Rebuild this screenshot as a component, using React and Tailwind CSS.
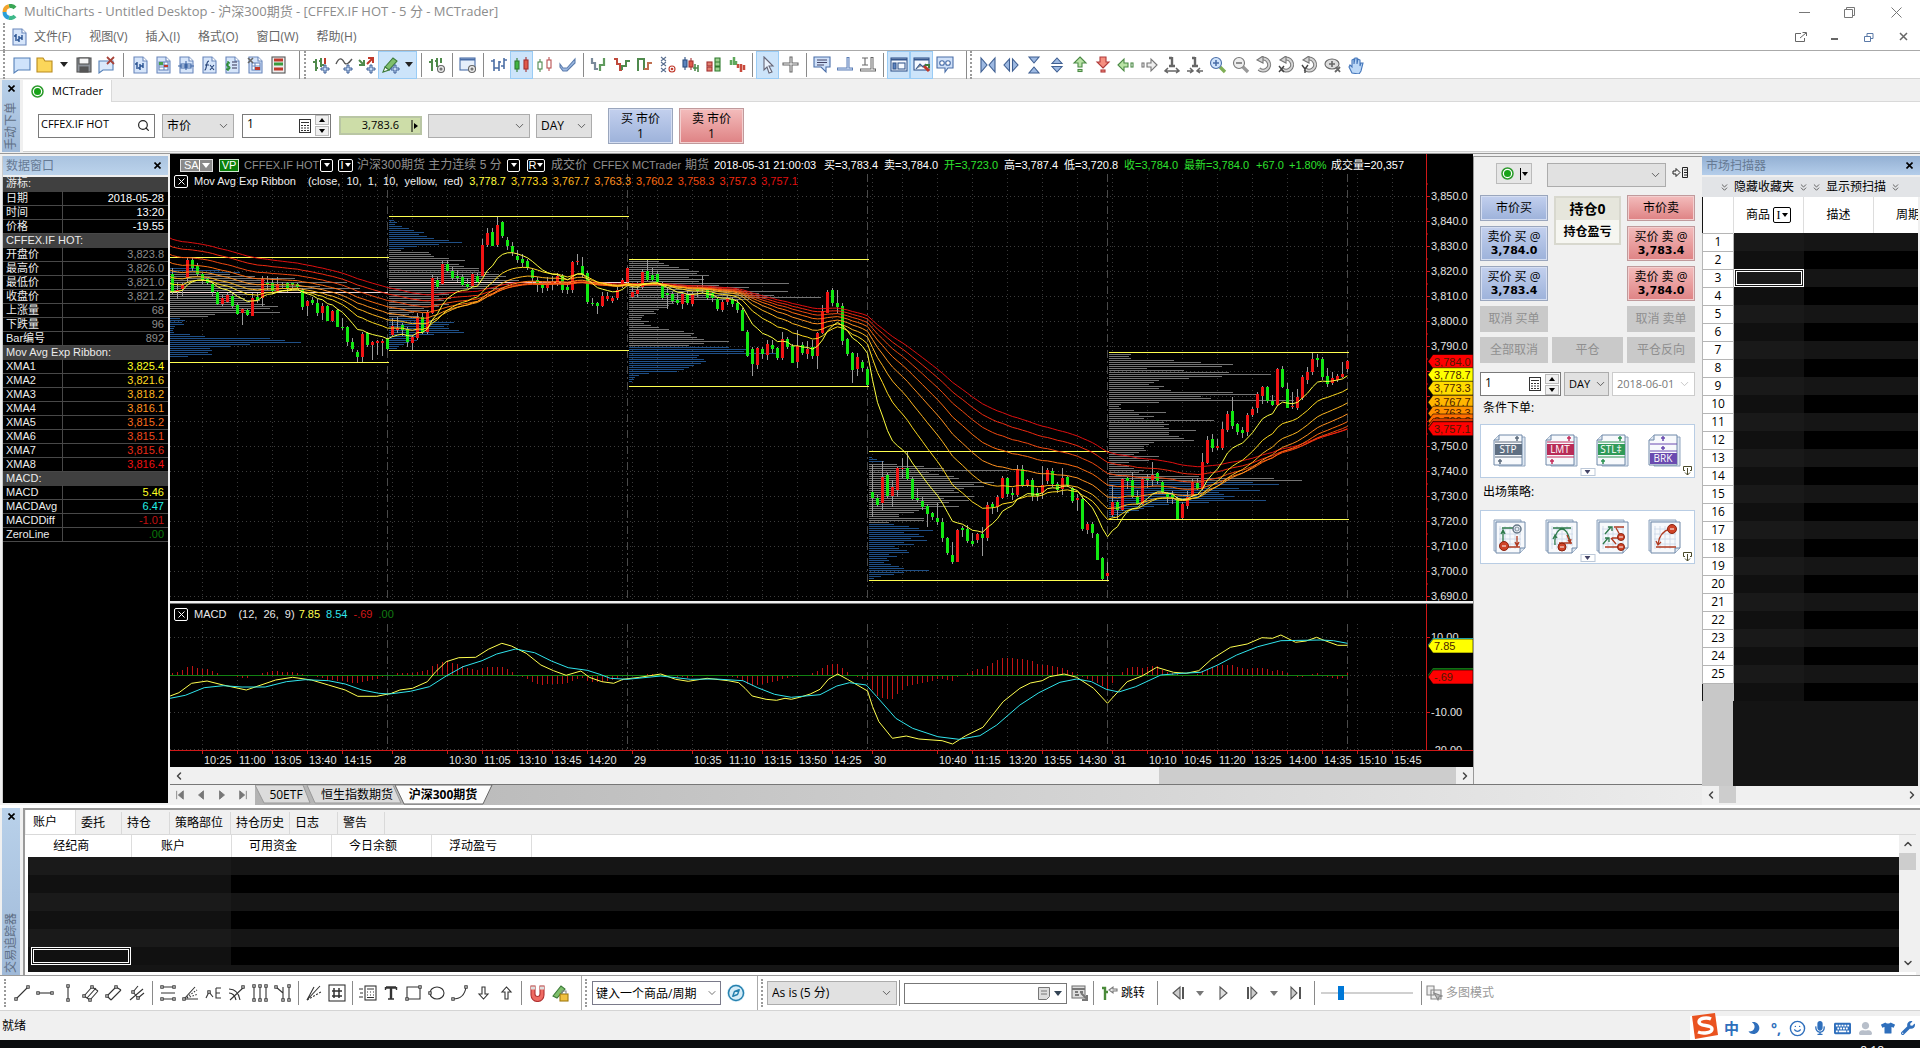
import React from "react";
import { FaTshirt, FaWrench, FaMicrophone, FaMoon, FaKeyboard, FaUserAlt } from "react-icons/fa";
import { ChevronDown, ChevronLeft, ChevronRight, ChevronUp, ChevronsDown, Search, Smile, Compass } from "lucide-react";

/* ------------------------------------------------------------------ */
/* Price data: each bar is "open close high low" as depth on the price scale */
/* ------------------------------------------------------------------ */
const parse = (s, shift = 0) =>
  s.split(",").map((b) => b.trim().split(" ").map((n) => Number(n) + shift));

const bars = [
  ...parse(
    "372 427 355 432,424 420 395 445,418 405 400 440,385 330 325 400,330 353 322 365,347 370 340 378,371 390 368 400,387 400 384 404,403 427 400 438,427 463 424 467,462 444 435 468,455 434 430 460,437 467 430 475,465 491 460 496,489 476 474 524,480 494 477 498,497 443 430 500,440 448 430 460,445 387 377 467,400 402 377 420,400 425 384 432,422 402 380 425,402 404 395 412,398 412 395 425,400 407 398 415,402 412 400 416,420 470 415 482,467 453 450 498,450 458 440 463,458 487 448 500,490 468 460 510,468 512 466 514,513 484 480 516,480 530 477 532,530 532 505 540,531 575 529 590,576 598 565 607,606 620 600 636,620 552 545 636,548 584 546 592,585 575 572 628,580 574 570 616,580 573 568 620,567 597 564 600"
  ),
  ...parse(
    "555 528 505 560,540 535 500 548,524 540 520 560,538 578 530 590,578 560 555 600,563 503 488 568,502 547 490 552,548 487 480 553,487 383 375 492,390 410 380 415,402 342 333 405,342 363 330 370,362 383 350 388,378 385 360 395,380 403 373 410,402 412 385 415,410 373 370 413,377 396 370 400,378 285 268 380,285 248 234 290,246 287 235 290,287 226 200 290,215 258 212 262,270 287 262 300,289 307 275 318,317 328 300 340,328 340 313 352,333 353 327 360,360 385 355 400,390 405 380 425,403 415 395 427,413 405 380 423,402 395 378 420,400 378 370 410,378 420 372 430,412 422 400 432,420 336 332 427,336 332 313 345,347 375 320 382,370 458 362 460,460 462 445 470,460 468 457 494,467 437 425 470,448 439 427 453,452 443 437 458,444 420 412 450,408 390 385 415,395 353 350 400"
  ),
  ...parse(
    "440 425 405 445,432 420 395 440,412 367 358 418,364 390 328 395,375 390 355 395,372 397 362 402,402 444 395 450,428 435 410 475,432 452 425 458,450 460 430 465,462 432 425 475,433 460 420 465,462 432 425 467,418 425 408 440,415 417 378 430,420 445 412 450,430 445 425 455,447 478 440 482,480 455 450 485,457 445 435 465,447 463 440 470,458 480 450 490,480 543 475 545,545 617 540 622,596 640 590 678,645 595 590 655,597 612 590 625,617 583 570 630,585 598 570 608,595 625 590 630,625 567 545 628,567 590 560 595,587 637 583 640,635 587 540 655,585 608 575 615,613 597 573 627,592 620 570 627,620 550 545 655,550 484 465 553,487 425 420 490,420 458 415 468,458 470 420 490,468 573 460 587,567 612 565 620,608 660 605 698,658 622 610 680,636 655 630 665,657 705 652 708"
  ),
  ...parse(
    "276 295 195 350,293 313 285 320,310 232 182 330,225 288 220 295,290 262 240 320,270 203 200 290,207 203 175 235,205 237 155 240,238 298 232 302,295 300 265 307,302 320 290 330,318 343 313 383,340 352 335 360,355 368 310 375,365 412 355 428,414 460 412 465,464 485 425 490,485 390 388 487,385 390 378 410,387 423 374 428,422 432 400 440,422 403 400 430,403 415 380 468,415 315 307 425,311 320 305 340,320 290 285 335,292 233 228 298,233 282 230 290,278 283 265 300,285 208 195 290,207 257 195 262,255 240 237 262,240 288 235 305,280 290 265 303,278 255 197 297,243 210 205 252,213 252 203 260,252 270 247 280,268 235 205 285,231 255 228 260,264 303 260 308,300 295 282 332,297 388 288 392,390 372 367 403,372 398 367 415,403 480 400 482,475 538 472 541,530 520 487 545,345 306 255 350,306 330 300 358,330 238 235 333,233 243 230 265,240 290 217 295,290 312 270 315,312 237 230 315,238 240 222 265,240 225 187 258,220 245 215 250,247 277 243 282,280 293 275 308,285 295 272 312,296 355 290 358,355 312 305 358,317 290 272 325,288 247 237 290,250 268 235 270,267 187 158 270,190 120 108 193,117 143 102 155,142 137 117 150,143 87 65 150,90 42 32 95,33 78 -10 85,73 98 68 103,90 100 80 113,97 45 40 110,45 27 20 50",
    750
  ),
  ...parse(
    "775 733 727 790,740 712 707 762,712 755 708 760,752 765 735 768,765 657 655 768,657 710 648 715,717 773 700 775,772 768 725 775,772 740 717 780,745 682 675 750,690 667 650 700,667 627 608 675,625 630 612 650,627 680 620 690,677 700 655 712,700 685 665 703,690 678 672 695,682 672 637 685,657 633 630 665"
  ),
];

const py = (v) => v / 3 - 4;
const px = (i) => 2.5 + 5 * i;

/* Exponential averages of 10..80 bars, seeded with their values left of the window */
const seeds = [425, 400, 380, 360, 337, 313, 287, 264];
const ribbonColors = ["#ffff40", "#ffdb20", "#ffb620", "#ff9220", "#ff6d10", "#f04910", "#f02a10", "#e01010"];
const ribbons = seeds.map((seed, k) => {
  const a = 2 / ((k + 1) * 10 + 1);
  let e = seed;
  const pts = [`0,${py(seed).toFixed(1)}`];
  bars.forEach((b, i) => {
    e += a * (b[1] - e);
    pts.push(`${px(i)},${py(e).toFixed(1)}`);
  });
  return pts.join(" ");
});

/* Volume profile per session: [kind, first depth, lengths...] with one row every two pixels */
const profiles = [
  { x: 0, rows: [
    ["b", 355, 30, 50, 70], ["g", 373, 60, 85, 125, 95, 177, 120, 150, 190, 130], ["p", 427, 218],
    ["g", 433, 80, 70, 75, 90, 80, 95, 108, 100, 80, 110, 45, 38],
    ["b", 505, 10, 15, 12, 14, 5, 4, 3, 4, 20, 35, 100, 115, 131, 80, 60, 40, 42, 38, 42, 18]] },
  { x: 219, rows: [
    ["b", 211, 5, 8, 6, 13, 20, 25, 35, 30, 38, 45, 60, 73, 50, 28, 15],
    ["g", 301, 12, 40, 42, 45, 60, 76, 60, 70, 75, 90, 90, 100, 110, 117, 110, 130], ["p", 397, 240],
    ["g", 403, 120, 100, 115, 70, 65, 60, 50, 62, 55, 45, 60, 50, 35, 40, 25, 20, 30],
    ["b", 505, 30, 45, 65, 60, 55, 60, 70, 75, 45, 30, 25, 28, 20, 15, 10, 8]] },
  { x: 459, rows: [
    ["g", 328, 25, 30, 35, 40, 50, 60, 70, 68, 80, 60, 75, 70, 160, 90, 120, 110, 159, 130, 145, 192, 120, 60, 45, 40, 38, 30, 25, 27, 15, 13, 12, 20, 15, 22, 30, 40, 55, 65, 62, 68, 75, 100, 75, 60],
    ["b", 592, 100, 118, 115, 150, 70, 68, 75, 77, 72, 65, 60, 55, 48, 20, 10, 6, 5, 3]] },
  { x: 699, rows: [
    ["b", 922, 3, 8, 15],
    ["g", 941, 28, 55, 75, 140, 60, 70, 85, 90, 80, 125, 105, 115, 95, 85, 90, 70, 105, 75, 100, 80, 70, 90, 60, 50, 45, 30, 30, 55, 55, 20],
    ["b", 1123, 25, 40, 50, 64, 35, 50, 55, 42, 58, 35, 45, 25, 30, 38, 40, 20, 28, 18, 20, 15, 22, 30, 35, 60, 35, 25, 12, 5]] },
  { x: 939, rows: [
    ["g", 613, 22, 20, 22, 65, 92, 124, 113, 38, 75, 120, 162, 113, 80, 50, 45, 40, 55, 50, 62, 124, 150, 92, 102, 185, 50, 12, 10, 12, 25, 57, 30, 45, 35, 105, 55, 60, 55, 60, 87, 60, 60, 70, 75, 85, 45, 40, 35, 35, 37, 30, 25, 50, 35, 40, 20, 12, 20, 25, 35, 30, 48, 90, 165, 193],
    ["b", 997, 144, 170, 100, 130, 151, 110, 115, 125, 115, 157, 100, 60, 45, 35, 30, 20, 12, 6]] },
];
const profileColor = { b: "#1f4f86", g: "#747474", p: "#f0d8d8" };

const levels = [
  [0, 219, 322, 637], [219, 459, 199, 601], [459, 699, 328, 709], [699, 939, 904, 1291], [939, 1179, 607, 1108],
];

const minorGrid = [32, 67, 102, 137, 172, 207, 222, 242, 277, 312, 347, 382, 417, 452, 462, 487, 522, 557, 592, 627, 662, 702, 732, 767, 802, 837, 872, 907, 942, 977, 1012, 1047, 1082, 1117, 1152, 1187, 1222];
const dayGrid = [217, 457, 697, 937, 1177];
const timeLabels = [
  [32, "10:25"], [67, "11:00"], [102, "13:05"], [137, "13:40"], [172, "14:15"], [222, "28"], [277, "10:30"], [312, "11:05"], [347, "13:10"], [382, "13:45"], [417, "14:20"], [462, "29"], [522, "10:35"], [557, "11:10"], [592, "13:15"], [627, "13:50"], [662, "14:25"], [702, "30"], [767, "10:40"], [802, "11:15"], [837, "13:20"], [872, "13:55"], [907, "14:30"], [942, "31"], [977, "10:10"], [1012, "10:45"], [1047, "11:20"], [1082, "13:25"], [1117, "14:00"], [1152, "14:35"], [1187, "15:10"], [1222, "15:45"],
];

/* MACD traces, sampled in two halves of the window */
const trace = (a, b) => [
  ...a.map(([x, y]) => [x / 2.376 - 10, y / 3 - 14]),
  ...b.map(([x, y]) => [x / 2.376 + 650, y / 3 - 14]),
];
const macd = trace(
  [[24, 318], [45, 308], [75, 280], [112, 273], [150, 285], [205, 300], [240, 285], [275, 270], [315, 262], [360, 270], [400, 285], [440, 300], [470, 319], [515, 319], [550, 310], [570, 300], [600, 295], [635, 275], [655, 245], [680, 215], [710, 203], [750, 202], [780, 178], [812, 160], [835, 168], [870, 190], [905, 225], [935, 242], [965, 256], [1000, 243], [1020, 262], [1050, 275], [1078, 280], [1100, 268], [1140, 262], [1190, 252], [1225, 268], [1255, 274], [1300, 265], [1350, 272], [1375, 278], [1390, 295], [1407, 318], [1440, 328], [1465, 331], [1485, 325], [1500, 328], [1520, 322], [1545, 312]],
  [[0, 298], [20, 268], [42, 252], [65, 268], [113, 303], [125, 350], [140, 395], [172, 445], [205, 438], [235, 447], [290, 452], [315, 462], [345, 438], [387, 412], [410, 375], [435, 335], [475, 295], [500, 279], [528, 272], [545, 260], [580, 252], [610, 262], [650, 295], [683, 340], [730, 275], [765, 258], [800, 232], [840, 247], [870, 250], [900, 242], [930, 208], [975, 172], [1015, 162], [1050, 143], [1075, 145], [1095, 135], [1130, 157], [1155, 153], [1180, 142], [1200, 152], [1230, 166], [1253, 166]]
);
const macdAvg = trace(
  [[24, 325], [60, 316], [105, 293], [150, 287], [195, 291], [250, 291], [300, 275], [345, 269], [400, 272], [440, 282], [480, 300], [520, 310], [545, 312], [595, 304], [640, 290], [680, 258], [720, 230], [765, 212], [800, 192], [845, 177], [890, 188], [930, 213], [970, 233], [1015, 241], [1045, 253], [1070, 265], [1110, 268], [1190, 258], [1260, 268], [1320, 267], [1385, 272], [1420, 293], [1460, 313], [1500, 322]],
  [[0, 314], [40, 288], [70, 278], [110, 285], [135, 320], [180, 385], [220, 415], [280, 440], [330, 448], [380, 437], [420, 405], [475, 345], [520, 308], [570, 277], [610, 267], [645, 275], [680, 298], [710, 306], [750, 290], [810, 255], [860, 250], [905, 247], [945, 225], [990, 195], [1040, 170], [1095, 152], [1190, 150], [1220, 152], [1253, 160]]
);
const at = (line, x) => {
  const k = line.findIndex((p) => p[0] >= x);
  if (k <= 0) return line[0][1];
  const [x0, y0] = line[k - 1];
  const [x1, y1] = line[k];
  return y0 + ((x - x0) / (x1 - x0)) * (y1 - y0);
};
const toPoints = (line) => line.map((p) => `${p[0].toFixed(1)},${p[1].toFixed(1)}`).join(" ");
const ZERO = 71.5;

/* ------------------------------------------------------------------ */
/* Small drawn icons                                                    */
/* ------------------------------------------------------------------ */
const G = ({ children, s = 18, c = "#555" }) => (
  <svg width={s} height={s} viewBox="0 0 18 18" fill="none" stroke={c} strokeWidth="1.1" aria-hidden="true">
    {children}
  </svg>
);
const Page = ({ children }) => (
  <G c="#6a88bc">
    <path d="M3 1h9l4 4v12H3z" fill="#d6e5fa" />
    <path d="M12 1v4h4" fill="#fff" />
    {children}
  </G>
);
const Plus = ({ x = 13, y = 13 }) => (
  <path d={`M${x - 1} ${y - 4}h2v3h3v2h-3v3h-2v-3h-3v-2h3z`} fill="#c3d9f5" stroke="#3c5f96" strokeWidth="1" />
);
const Hc = ({ c, f, x, y, h }) => (
  <>
    <path d={`M${x + 2} ${y - 3}v${h + 6}`} stroke={c} />
    <rect x={x} y={y} width="4" height={h} fill={f} stroke={c} />
  </>
);
const Arc = ({ children }) => (
  <G c="#777">
    <path d="M6 3a6 6 0 1 1-2 10" strokeWidth="4" />
    <path d="M6 3a6 6 0 1 1-2 10" stroke="#d4d4d4" strokeWidth="2" />
    <path d="M8 0v7L2 4z" fill="#d4d4d4" />
    {children}
  </G>
);

const icons = {
  window: <G c="#5580b8"><path d="M1 2h16v12H5l-4 3z" fill="#cfe3fb" /></G>,
  folder: <G c="#b98a1c"><path d="M1 16V2h6l2 3h7v11z" fill="#fbd65a" /></G>,
  save: <G c="#555"><rect x="2" y="2" width="14" height="14" fill="#8d9299" /><rect x="4" y="2" width="10" height="6" fill="#f5f5f5" /><rect x="5" y="11" width="8" height="5" fill="#555" /></G>,
  closeWin: <G c="#5580b8"><path d="M1 5h14v9H5l-4 3z" fill="#dceafb" /><path d="M9 1l7 7M16 1L9 8" stroke="#a8443a" strokeWidth="1.800" /></G>,
  docChart: <Page><path d="M6 6v7M4 8h2M9 8v6M7 12h2M12 7v5M9 10h3" stroke="#26508f" strokeWidth="1.400" /></Page>,
  docGrid: <Page><rect x="5" y="6" width="9" height="8" fill="#fff" /><path d="M5 9h9M5 11h9M10 6v8" /><rect x="5" y="6" width="4" height="3" fill="#49a04b" stroke="none" /><rect x="10" y="9" width="4" height="2" fill="#c0392b" stroke="none" /></Page>,
  docTree: <Page><path d="M9 5v9M1 10h16M4 8h4v4H4zM10 8h4v4h-4z" fill="#e8f0fc" stroke="#3f66a5" /></Page>,
  docFx: <Page><path d="M9 5c-2 0-2 2-2.500 4.500S6 14 4.500 14M5 9h4M10 9l4 5M14 9l-4 5" stroke="#223f74" /></Page>,
  docDollar: <Page><path d="M9 6h5M9 9h5M9 12h5" stroke="#335" /><path d="M7 7c-4-1-4 3-1.500 3.500S7 14 3 13M5 5v10" stroke="#2c8a35" strokeWidth="1.300" /></Page>,
  docPct: <Page><rect x="6" y="7" width="8" height="7" fill="#fff" /><path d="M6 10h8M9 7v7" /><path d="M2 2l5 5M7 2L2 7" stroke="#666" strokeWidth="1.600" /><rect x="9" y="11" width="5" height="3" fill="#c0392b" stroke="none" /></Page>,
  docBars: <G c="#555"><rect x="3" y="1" width="13" height="16" fill="#eee" /><path d="M5 4h9" stroke="#c0392b" strokeWidth="3" /><path d="M5 8h9" stroke="#3a9a3c" strokeWidth="3" /><path d="M5 13h9" stroke="#c0392b" strokeWidth="3" /></G>,
  addBars: <G c="#4f8a4b"><path d="M4 3v12M1 6h3M4 12h2M9 2v9M7 5h2M9 9h3" strokeWidth="2" /><path d="M13 2v6" stroke="#c0392b" strokeWidth="2" /><Plus /></G>,
  addLine: <G><path d="M1 8c3-7 6-6 8-2s5 1 8-3" strokeWidth="1.400" /><Plus /></G>,
  addSig: <G c="#4f8a4b"><path d="M1 4l5 5M6 4v5H1" strokeWidth="2" /><path d="M9 8l6-6M10 2h5v5" stroke="#c0392b" strokeWidth="2" /><Plus /></G>,
  pen: <G c="#3c7a38"><path d="M3 11L11 2l4 3-8 9z" fill="#7ebf6c" /><path d="M1 16l2-5 4 3z" fill="#fff" /><Plus x={13} y={13} /></G>,
  barGear: <G c="#4f8a4b"><path d="M4 3v12M1 6h3M9 2v9M7 5h2M13 2v5" strokeWidth="2" /><circle cx="13" cy="13" r="3.500" stroke="#666" fill="#eee" /><circle cx="13" cy="13" r="1" stroke="#666" /></G>,
  winGear: <G c="#4a6ea8"><rect x="1" y="2" width="15" height="12" fill="#e6effb" /><path d="M1 3.500h15" strokeWidth="2" /><circle cx="13" cy="13" r="3.500" stroke="#666" fill="#eee" /><circle cx="13" cy="13" r="1" stroke="#666" /></G>,
  ohlc: <G c="#4c6fa5"><path d="M4 3v12M1 5h3M4 12h3M9 5v10M7 12h2M9 6h2M14 2v11M11 10h3M14 4h3" strokeWidth="1.600" /></G>,
  candle: <G><Hc c="#2f7a2f" f="#41b541" x={2} y={5} h={8} /><Hc c="#a43030" f="#e05a4a" x={11} y={4} h={9} /></G>,
  hollow: <G><Hc c="#4f8a4f" f="#fff" x={2} y={6} h={7} /><Hc c="#b85050" f="#fff" x={11} y={4} h={8} /></G>,
  lineArea: <G c="#5c7dad"><path d="M1 8l3 4h4l8-9v4l-8 8H4l-3-4z" fill="#9db9e2" /></G>,
  renko1: <G><path d="M2 2v5h3v6h3" stroke="#7a8a9a" strokeWidth="2.200" /><path d="M10 15V9h4V2" stroke="#5f9a5d" strokeWidth="2.200" /></G>,
  renko2: <G><path d="M1 3h3v5h3v6h2" stroke="#c0493b" strokeWidth="2" /><path d="M9 14v-4h4V5h4" stroke="#4f8a4d" strokeWidth="2" /></G>,
  kagi: <G><path d="M2 15V3h6v11" stroke="#4f8a4d" strokeWidth="2" /><path d="M8 13h4V7h4" stroke="#c07050" strokeWidth="2" /></G>,
  pnf: <G c="#5a6f90"><path d="M2 1l5 4M7 1L2 5M2 6l5 4M7 6l-5 4M2 12l5 4M7 12l-5 4" /><circle cx="13" cy="13" r="3" stroke="#c0392b" /><circle cx="13" cy="13" r=".8" stroke="#c0392b" /></G>,
  mixed: <G><Hc c="#2b4d80" f="#5b83bd" x={1} y={4} h={7} /><Hc c="#a43030" f="#e05a4a" x={7} y={5} h={6} /><path d="M13 8v7M16 9v7M11 12h5" stroke="#4f8a4d" strokeWidth="1.600" /></G>,
  blocks: <G><rect x="2" y="6" width="5" height="4" fill="#e08070" stroke="#a43030" /><rect x="2" y="11" width="5" height="4" fill="#e08070" stroke="#a43030" /><path d="M10 2h5v4h-5zM10 6h5v4h-5zM10 11h5v4h-5z" fill="#9fd190" stroke="#2f7a2f" /></G>,
  steps: <G><path d="M3 9V4M6 9V1M8 9V5" stroke="#5fa85c" strokeWidth="2.500" /><path d="M10 8v4M13 8v8M16 9v5" stroke="#c84a3c" strokeWidth="2.500" /></G>,
  cursor: <G c="#667"><path d="M5 1l9 9h-4l3 6-3 1-2-6-3 3z" fill="#eaf3fd" /></G>,
  cross: <G c="#666"><path d="M8 1h2v6h6v2h-6v7H8V9H1V7h7z" fill="#fff" /></G>,
  note: <G c="#4a6ea8"><path d="M1 1h16v10h-4v5l-5-5H1z" fill="#cfe0f8" /><path d="M4 4h10M4 6.500h10M4 9h7" stroke="#446" strokeWidth="1" /></G>,
  snap: <G c="#5b7db5"><path d="M1 13h16M12 1v13" strokeWidth="3" /><path d="M2 13h14M12 2v11" stroke="#dbe8fa" strokeWidth="1" /></G>,
  snapT: <G c="#666"><path d="M1 14h16M13 1v13" strokeWidth="3" /><path d="M2 14h14M13 2v12" stroke="#fff" strokeWidth="1" /><path d="M3 2h6M3 9h6M6 2v7" /></G>,
  panel: <G c="#36588f"><rect x="1" y="2" width="16" height="13" fill="#f6faff" /><path d="M1 3.500h16" strokeWidth="2" /><rect x="3" y="7" width="3" height="6" fill="#5d84c0" /><rect x="8" y="7" width="7" height="6" /></G>,
  panelPic: <G c="#36588f"><rect x="1" y="2" width="15" height="12" fill="#f6faff" /><path d="M1 3.500h15" strokeWidth="2" /><path d="M3 13l4-5 3 3 3-3" fill="#999" /><path d="M11 10l5 5" stroke="#c0392b" strokeWidth="3" /><path d="M12 9h4v3" stroke="#3f7d3d" strokeWidth="2" /></G>,
  find: <G c="#4a6ea8"><path d="M1 1h16v11h-5l-3 4v-4H1z" fill="#cfe0f8" /><circle cx="6" cy="7" r="2.300" fill="#fff" /><circle cx="12" cy="7" r="2.300" fill="#fff" /></G>,
  inH: <G c="#3f5f92"><path d="M2 2v14l6-7zM16 2v14l-6-7z" fill="#9db9e2" /></G>,
  outH: <G c="#3f5f92"><path d="M7.500 3v12L2 9zM10.500 3v12L16 9z" fill="#9db9e2" /></G>,
  inV: <G c="#3f5f92"><path d="M4 1h10L9 7zM4 17h10L9 11z" fill="#9db9e2" /></G>,
  outV: <G c="#3f5f92"><path d="M4 7.500h10L9 2zM4 10.500h10L9 16z" fill="#9db9e2" /></G>,
  up: <G c="#4b8a45"><path d="M9 1l6 6h-4v4H7V7H3z" fill="#b9e3a6" /><rect x="7" y="13.500" width="4" height="2" fill="#b9e3a6" /></G>,
  down: <G c="#b03a3a"><path d="M9 12l6-6h-3V1H6v5H3z" fill="#f58f80" /><rect x="7" y="14" width="4" height="2" fill="#f58f80" /></G>,
  left: <G c="#4b8a45"><path d="M1 9l6-6v4h4v4H7v4z" fill="#b9e3a6" /><rect x="14" y="7" width="2" height="4" /></G>,
  right: <G c="#777"><path d="M17 9l-6-6v4H7v4h4v4z" fill="#eee" /><rect x="2" y="7" width="2" height="4" /></G>,
  spaceOut: <G c="#666"><path d="M9 1v10M6 2h3M6 10h6" strokeWidth="2.400" /><path d="M2 15h14M5 12l-3 3 3 2M13 12l3 3-3 2" strokeWidth="1.500" /></G>,
  spaceIn: <G c="#666"><path d="M9 1v10M6 2h3M6 10h6" strokeWidth="2.400" /><path d="M1 15h6M17 15h-6M4 12l3 3-3 2M14 12l-3 3 3 2" strokeWidth="1.500" /></G>,
  zoomIn: <G c="#4a6ea8"><path d="M11 11l5 5" stroke="#7fae55" strokeWidth="3.400" /><circle cx="7" cy="7" r="5.500" fill="#cfe3fb" /><path d="M7 4v6M4 7h6" strokeWidth="1.600" /></G>,
  zoomOut: <G c="#777"><path d="M11 11l5 5" stroke="#999" strokeWidth="3.400" /><circle cx="7" cy="7" r="5.500" fill="#eee" /><path d="M4 7h6" strokeWidth="1.600" /></G>,
  undo: <Arc />,
  undoX: <Arc><path d="M1 10l5 6M6 10l-5 6" stroke="#444" strokeWidth="1.400" /></Arc>,
  undoY: <Arc><path d="M1 9l3 4 3-4M4 13v4" stroke="#444" strokeWidth="1.400" /></Arc>,
  eye: <G c="#666"><ellipse cx="8" cy="8" rx="7" ry="5" fill="#ddd" /><path d="M5 8h6M8 5v6" strokeWidth="1.600" /><path d="M12 11l4 5M16 11l-5 5" strokeWidth="1.800" /></G>,
  hand: <G c="#4577bb"><path d="M5 17l-3-6 1-2 2 2V4l2-1v5l1-6h2v6l1-5 2 1v6l1-3h2l-2 8-2 3z" fill="#bcd8f7" /></G>,
};

const Sq = ({ x, y }) => <rect x={x - 1.2} y={y - 1.2} width="2.400" height="2.400" fill="#fff" strokeWidth="1" />;
const K = (p) => <G c="#333">{p.children}</G>;
const drawIcons = {
  line: <K><path d="M3 15L15 3" /><Sq x={3} y={15} /><Sq x={15} y={3} /></K>,
  hline: <K><path d="M2 9h14" /><Sq x={2} y={9} /><Sq x={16} y={9} /></K>,
  vline: <K><path d="M9 2v14" /><Sq x={9} y={2} /><Sq x={9} y={16} /></K>,
  chan: <K><path d="M2 12l8-9M5 14l9-10M8 16l8-9M2 12l6 4M10 3l6 4" /><Sq x={2} y={12} /><Sq x={10} y={3} /><Sq x={8} y={16} /></K>,
  chan2: <K><path d="M2 12l9-9M6 16l10-10M2 12l4 4M11 3l5 3" /><Sq x={2} y={12} /><Sq x={11} y={3} /></K>,
  fork: <K><path d="M2 16l13-11M5 8l5-6M10 14l6-5M5 8l5 6" /><Sq x={5} y={8} /><Sq x={10} y={14} /></K>,
  fib: <K><path d="M2 3h14M2 9h14M2 15h14" /><Sq x={3} y={3} /><Sq x={15} y={3} /><Sq x={3} y={15} /><Sq x={15} y={15} /></K>,
  fan: <K><path d="M2 15h14M2 15L13 3" /><path d="M2 15l14-5M2 15L15 6" strokeDasharray="1.500 1.500" /><Sq x={2} y={15} /></K>,
  wave: <K><path d="M1 14l3-6 4 5M11 4v10h5M11 4h5M11 9h4" /><Sq x={4} y={8} /></K>,
  arcs: <K><path d="M2 16L16 3M1 5c7 0 10 5 11 11M1 9c4 0 6 3 7 7" /><Sq x={15} y={3} /></K>,
  cols: <K><path d="M3 3v12M9 3v12M15 3v12" /><Sq x={3} y={2} /><Sq x={9} y={2} /><Sq x={15} y={2} /><Sq x={3} y={16} /><Sq x={9} y={16} /><Sq x={15} y={16} /></K>,
  cols2: <K><path d="M2 3l7 6M9 3v12M15 3v12" /><Sq x={2} y={3} /><Sq x={9} y={16} /><Sq x={15} y={2} /><Sq x={15} y={16} /></K>,
  rays: <K><path d="M2 16L9 3M2 16L15 2" /><path d="M2 16l14-8" strokeDasharray="2 1.500" /></K>,
  grid: <K><rect x="1" y="1" width="16" height="16" /><path d="M6 4v10M11 4v10M4 7h10M4 12h10" strokeWidth="1.500" /></K>,
  note: <K><rect x="6" y="2" width="11" height="14" /><path d="M8 5h7M8 8h1M11 8h1M14 8h1M8 11h1M11 11h1M14 11h1M8 13.500h7M0 5h4M1 9h3M0 13h4" /></K>,
  text: <K><path d="M4 3.500h10M9 3v12" strokeWidth="2.400" /><path d="M3.500 3v3M14.500 3v3M6 15h6" strokeWidth="1.400" /></K>,
  rect: <K><path d="M2 3h13v12H2z" /><Sq x={2} y={15} /><Sq x={15} y={3} /></K>,
  ell: <K><ellipse cx="9" cy="9" rx="7" ry="6" /><Sq x={2} y={9} /></K>,
  arc: <K><path d="M2 15c8 0 12-5 13-12" /><Sq x={2} y={15} /><Sq x={15} y={3} /></K>,
  aDown: <K><path d="M8 3h3v7h3l-4.500 5L5 10h3z" /></K>,
  aUp: <K><path d="M8 15h3V8h3L9.500 3 5 8h3z" /></K>,
  magnet: <G c="#b03030"><path d="M3 2h4v8a2.500 2.500 0 0 0 5 0V2h4v9a6.500 6.500 0 0 1-13 0z" fill="#ee6a62" /><path d="M3 4h4M12 4h4" stroke="#ddd" strokeWidth="3" /></G>,
  penLock: <G c="#3c7a38"><path d="M2 12L10 2l4 3-8 9z" fill="#7ebf6c" /><rect x="9" y="10" width="8" height="7" fill="#f0c040" stroke="#a07a10" /><path d="M11 10V7h4v3" stroke="#888" /></G>,
};

const Btn = ({ label, children, on }) => (
  <button
    type="button"
    aria-label={label}
    className={`flex h-7 w-[23px] shrink-0 items-center justify-center ${on ? "border border-[#9accf5] bg-[#cce4fa]" : ""}`}
  >
    {children}
  </button>
);
const Sep = ({ wide }) => (
  <span className={`flex shrink-0 justify-center ${wide ? "w-[10px]" : "w-2"}`}>
    <span className="h-6 w-px bg-[#8a8a8a]" />
  </span>
);
const Grip = () => <span className="h-7 w-[2px] shrink-0 border-l-2 border-dotted border-[#9a9a9a]" />;
const Caret = ({ c = "#222" }) => (
  <svg width="8" height="5" viewBox="0 0 8 5" aria-hidden="true"><path d="M0 0h8L4 5z" fill={c} /></svg>
);
const Tools = ({ names, set, on = [] }) =>
  names.map((n) => <Btn key={n} label={n} on={on.includes(n)}>{set[n]}</Btn>);

const Select = ({ label, value, className, dim, arrow = "right-1" }) => (
  <div className={`relative shrink-0 ${className}`}>
    <select aria-label={label} defaultValue={value} className={`h-full w-full appearance-none border pl-1 outline-none ${dim ? "border-[#ccc] bg-white text-[#777]" : "border-[#acacac] bg-[#e1e1e1] text-black"}`}>
      <option>{value}</option>
    </select>
    <ChevronDown size={13} strokeWidth={1.5} className={`pointer-events-none absolute top-1/2 -translate-y-1/2 ${arrow} ${dim ? "text-[#bbb]" : "text-[#444]"}`} />
  </div>
);

const Calc = () => (
  <svg width="12" height="14" viewBox="0 0 12 14" fill="none" stroke="#333" aria-hidden="true">
    <rect x=".5" y=".5" width="11" height="13" />
    <path d="M2 3.500h8M2 6.500h2M5 6.500h2M8 6.500h2M2 9h2M5 9h2M8 9h2M2 11.500h2M5 11.500h2M8 11.500h2" />
  </svg>
);
const NumberBox = ({ label, className }) => (
  <div className={`flex h-6 shrink-0 items-center border border-[#7a7a7a] bg-white pr-px ${className}`}>
    <input aria-label={label} defaultValue="1" className="h-full w-full min-w-0 flex-1 pb-1 pl-1 outline-none" />
    <Calc />
    <span className="ml-1 flex flex-col gap-px">
      <button type="button" aria-label="增加" className="flex h-[10px] w-[14px] items-center justify-center border border-[#bbb] bg-[#f0f0f0]">
        <svg width="6" height="4" viewBox="0 0 6 4"><path d="M0 4h6L3 0z" /></svg>
      </button>
      <button type="button" aria-label="减少" className="flex h-[10px] w-[14px] items-center justify-center border border-[#bbb] bg-[#f0f0f0]">
        <svg width="6" height="4" viewBox="0 0 6 4"><path d="M0 0h6L3 4z" /></svg>
      </button>
    </span>
  </div>
);
const Led = () => (
  <svg width="13" height="13" viewBox="0 0 13 13" aria-hidden="true">
    <circle cx="6.500" cy="6.500" r="5.500" fill="#fff" stroke="#2b9a2b" strokeWidth="1.500" />
    <circle cx="6.500" cy="6.500" r="3.500" fill="#17a317" />
  </svg>
);
const XBtn = ({ label }) => (
  <button type="button" aria-label={label} className="flex h-4 w-4 items-center justify-center">
    <svg width="7" height="7" viewBox="0 0 7 7" stroke="#000" strokeWidth="1.600"><path d="M.5.5l6 6M6.500.5l-6 6" /></svg>
  </button>
);

const buyCls = "border border-[#9aa6bd] bg-linear-to-b from-[#c3d0ee] to-[#9db2da] text-black shadow-[inset_0_0_0_1px_#d5def2]";
const sellCls = "border border-[#c09a9c] bg-linear-to-b from-[#f3bcbc] to-[#de8284] text-black shadow-[inset_0_0_0_1px_#f3cfcf]";

/* ------------------------------------------------------------------ */
/* Title, menu and toolbar                                              */
/* ------------------------------------------------------------------ */
function TitleBar() {
  return (
    <header className="bg-white text-[#8c8c8c]">
      <div className="flex h-6 items-center pl-[2px]">
        <svg width="16" height="16" viewBox="0 0 16 16" fill="none" strokeWidth="4">
          <path d="M13 4A6 6 0 0 0 7 2.200" stroke="#3aa655" /><path d="M7 2.200A6 6 0 0 0 2.500 8" stroke="#f2a32c" />
          <path d="M2.500 8A6 6 0 0 0 7 13.800" stroke="#2a9fd8" /><path d="M7 13.800A6 6 0 0 0 13 12" stroke="#3fb98a" />
        </svg>
        <h1 className="ml-[6px] text-[13px]">MultiCharts - Untitled Desktop - 沪深300期货 - [CFFEX.IF HOT - 5 分 - MCTrader]</h1>
        <div className="ml-auto flex text-[#777]">
          <button type="button" aria-label="最小化" className="flex h-6 w-[45px] items-center justify-center"><svg width="11" height="11" stroke="currentColor"><path d="M0 5.500h11" /></svg></button>
          <button type="button" aria-label="还原" className="flex h-6 w-[45px] items-center justify-center"><svg width="11" height="11" fill="none" stroke="currentColor"><path d="M.5 2.500h8v8h-8zM2.500 2V.5h8v8H9" /></svg></button>
          <button type="button" aria-label="关闭" className="flex h-6 w-[48px] items-center justify-center"><svg width="11" height="11" stroke="currentColor"><path d="M.5.5l10 10M10.500.5l-10 10" /></svg></button>
        </div>
      </div>
      <nav className="flex h-[26px] items-center pl-[3px] text-[12px] text-[#666]">
        <Grip />
        <span className="mr-[6px] ml-[5px]">{icons.docChart}</span>
        {["文件(F)", "视图(V)", "插入(I)", "格式(O)", "窗口(W)", "帮助(H)"].map((m) => (
          <button type="button" key={m} className="mr-[18px]">{m}</button>
        ))}
        <div className="ml-auto flex text-[#666]">
          <button type="button" aria-label="弹出" className="flex w-[34px] justify-center"><svg width="12" height="10" fill="none" stroke="currentColor"><path d="M6 1.500H.5v8h9V6M5 6l6-5M7.500.5h4V4" /></svg></button>
          <button type="button" aria-label="最小化子窗口" className="flex w-[34px] justify-center"><svg width="8" height="10" stroke="currentColor" strokeWidth="2"><path d="M0 7h7" /></svg></button>
          <button type="button" aria-label="还原子窗口" className="flex w-[34px] justify-center"><svg width="10" height="10" fill="none" stroke="#5b7aa8"><path d="M.5 4.500h6v5h-6zM3 4V1.500h6v5H7" /></svg></button>
          <button type="button" aria-label="关闭子窗口" className="flex w-[34px] justify-center"><svg width="9" height="9" stroke="currentColor" strokeWidth="1.500"><path d="M1 1l7 7M8 1L1 8" /></svg></button>
        </div>
      </nav>
      <div role="toolbar" aria-label="主工具栏" className="flex h-[29px] items-center border-y border-t-[#aaa] border-b-[#d4d4d4] pl-[3px]">
        <Grip />
        <span className="w-[5px]" />
        <Tools set={icons} names={["window", "folder"]} />
        <span className="flex w-4 justify-center"><Caret /></span>
        <Tools set={icons} names={["save", "closeWin"]} />
        <Sep wide />
        <Tools set={icons} names={["docChart", "docGrid", "docTree", "docFx", "docDollar", "docPct", "docBars"]} />
        <span className="w-[10px]" /><span className="mr-1 h-7 w-px bg-[#8a8a8a]" /><Grip /><span className="w-[3px]" />
        <Tools set={icons} names={["addBars", "addLine", "addSig"]} />
        <button type="button" aria-label="绘图工具" className="flex h-7 w-[39px] items-center justify-between border border-[#9accf5] bg-[#cce4fa] px-[3px]">{icons.pen}<Caret /></button>
        <Sep />
        <Tools set={icons} names={["barGear"]} /><Sep /><Tools set={icons} names={["winGear"]} /><Sep />
        <Tools set={icons} names={["ohlc", "candle", "hollow", "lineArea"]} on={["candle"]} />
        <Sep />
        <Tools set={icons} names={["renko1", "renko2", "kagi", "pnf", "mixed", "blocks", "steps"]} />
        <Sep />
        <Tools set={icons} names={["cursor", "cross"]} on={["cursor"]} />
        <Sep />
        <Tools set={icons} names={["note", "snap", "snapT"]} />
        <Sep />
        <Tools set={icons} names={["panel", "panelPic", "find"]} on={["panel", "panelPic"]} />
        <span className="w-[10px]" /><span className="mr-[3px] h-7 w-px bg-[#8a8a8a]" /><Grip /><span className="w-1" />
        <Tools set={icons} names={["inH", "outH", "inV", "outV", "up", "down", "left", "right", "spaceOut", "spaceIn", "zoomIn", "zoomOut", "undo", "undoX", "undoY", "eye", "hand"]} />
      </div>
    </header>
  );
}

const Strip = ({ title }) => (
  <div className="ml-[2px] flex w-[18px] shrink-0 flex-col items-center justify-between bg-linear-to-b from-[#b9d1ea] to-[#9fb9d8]">
    <XBtn label={`关闭${title}`} />
    <span className="rotate-180 pt-[2px] text-[12px] leading-4 text-[#5f6f85] [text-orientation:sideways] [writing-mode:vertical-rl]">{title}</span>
  </div>
);

function OrderBar() {
  return (
    <section aria-label="手动下单" className="mt-px flex h-[72px] text-[12px]">
      <Strip title="手动下单" />
      <div className="ml-[3px] flex min-w-0 flex-1 flex-col border-b border-[#d0d0d0]">
        <div className="flex h-[22px] border-b border-[#d9d9d9]">
          <button type="button" className="-mb-px flex items-center gap-2 border-r border-[#d9d9d9] bg-white px-2 text-[11px]"><Led />MCTrader</button>
        </div>
        <div className="flex flex-1 items-center bg-white pb-[2px] pl-[15px]">
          <div className="flex h-6 w-[117px] items-center border border-[#7a7a7a] bg-white pr-1">
            <input aria-label="商品" defaultValue="CFFEX.IF HOT" className="w-full min-w-0 flex-1 pb-[2px] pl-[2px] text-[11px] outline-none" />
            <Search size={13} strokeWidth={2.2} className="text-[#222]" />
          </div>
          <Select label="订单类型" value="市价" className="ml-[7px] h-6 w-[72px]" />
          <NumberBox label="数量" className="ml-2 w-[89px]" />
          <button type="button" className="ml-2 flex h-[19px] w-[83px] items-center border-2 border-[#b9c6a4] bg-[#cddda8] text-[11px]">
            <span className="flex-1 text-right">3,783.6</span>
            <svg className="ml-3" width="9" height="12" viewBox="0 0 9 12"><path d="M1 0v12" stroke="#000" /><path d="M3 3l4 3-4 3z" /></svg>
          </button>
          <Select label="账户" value="" className="ml-[6px] h-6 w-[102px]" />
          <Select label="有效期" value="DAY" className="ml-[6px] h-6 w-[56px]" />
          <button type="button" className={`ml-4 h-9 w-[65px] text-center leading-[15px] ${buyCls}`}>买 市价<br />1</button>
          <button type="button" className={`ml-[6px] h-9 w-[65px] text-center leading-[15px] ${sellCls}`}>卖 市价<br />1</button>
        </div>
      </div>
    </section>
  );
}

/* ------------------------------------------------------------------ */
/* Data window                                                          */
/* ------------------------------------------------------------------ */
const dataRows = [
  ["游标:"], ["日期", "2018-05-28", "#fff"], ["时间", "13:20", "#fff"], ["价格", "-19.55", "#fff"],
  ["CFFEX.IF HOT:"], ["开盘价", "3,823.8", "#8c8c8c"], ["最高价", "3,826.0", "#8c8c8c"], ["最低价", "3,821.0", "#8c8c8c"], ["收盘价", "3,821.2", "#8c8c8c"], ["上涨量", "68", "#8c8c8c"], ["下跌量", "96", "#8c8c8c"], ["Bar编号", "892", "#8c8c8c"],
  ["Mov Avg Exp Ribbon:"], ["XMA1", "3,825.4", "#ffff20"], ["XMA2", "3,821.6", "#ffdb20"], ["XMA3", "3,818.2", "#ffb620"], ["XMA4", "3,816.1", "#ff9220"], ["XMA5", "3,815.2", "#f86d1c"], ["XMA6", "3,815.1", "#f0491c"], ["XMA7", "3,815.6", "#e82a18"], ["XMA8", "3,816.4", "#f01010"],
  ["MACD:"], ["MACD", "5.46", "#ffff20"], ["MACDAvg", "6.47", "#20f0e8"], ["MACDDiff", "-1.01", "#c01010"], ["ZeroLine", ".00", "#087808"],
];
function DataWindow() {
  return (
    <aside aria-label="数据窗口" className="mt-[2px] mb-[2px] ml-[2px] flex w-[166px] shrink-0 flex-col border-l border-[#ccc]">
      <div className="flex h-[19px] items-center justify-between bg-linear-to-b from-[#a9c3e0] to-[#bcd3eb] pr-[3px] pl-[3px] text-[12px] text-[#667a94]">
        数据窗口<XBtn label="关闭数据窗口" />
      </div>
      <div className="mt-[2px] flex-1 bg-black">
        <table className="w-full table-fixed border-collapse font-['Liberation_Sans','Noto_Sans_CJK_SC',sans-serif] text-[11px] leading-[13px] text-[#ececec]">
          <colgroup><col className="w-[59px]" /><col /></colgroup>
          <tbody>
            {dataRows.map(([k, v, c]) =>
              v ? (
                <tr key={k + v} className="h-[14px] border-b border-[#484848]">
                  <th scope="row" className="overflow-hidden border-r border-[#484848] p-0 pl-[3px] text-left font-normal whitespace-nowrap"><span className="block h-[13px] overflow-visible">{k}</span></th>
                  <td className="p-0 pr-1 text-right" style={{ color: c }}>{v}</td>
                </tr>
              ) : (
                <tr key={k} className="h-[14px] border-b border-[#404040] bg-[#404040]">
                  <th colSpan={2} scope="colgroup" className="p-0 pl-[3px] text-left font-normal"><span className="block h-[13px]">{k}</span></th>
                </tr>
              )
            )}
          </tbody>
        </table>
      </div>
    </aside>
  );
}

/* ------------------------------------------------------------------ */
/* Chart                                                                */
/* ------------------------------------------------------------------ */
const Grid = ({ bottom, rows }) => (
  <g shapeRendering="crispEdges">
    {rows.map((y) => <line key={y} x1="0" x2="100%" y1={y} y2={y} stroke="#3c3c3c" strokeDasharray="1 3" />)}
    {minorGrid.map((x) => <line key={x} x1={x + 0.5} x2={x + 0.5} y1="20" y2={bottom} stroke="#3a3a3a" strokeDasharray="1 3" />)}
    {dayGrid.map((x) => <line key={x} x1={x + 0.5} x2={x + 0.5} y1="20" y2={bottom} stroke="#4a4a4a" strokeDasharray="8 3 2 3" />)}
  </g>
);
const Tag = ({ y, fill, text }) => (
  <g>
    <path d={`M2 ${y}l5-7h40v14h-40z`} fill={fill} stroke="#000" strokeWidth=".6" />
    <text x="8" y={y + 4} fill="#4a1c00">{text}</text>
  </g>
);
const priceY = (p) => 42.5 + (3850 - p) * 2.5;
const MiniBtn = ({ label, children, className = "w-[13px]" }) => (
  <button type="button" aria-label={label} className={`flex h-[13px] shrink-0 items-center justify-center gap-px rounded-xs border border-white text-[11px] text-white ${className}`}>
    {children}<svg width="6" height="4" viewBox="0 0 6 4"><path d="M0 0h6L3 4z" fill="#fff" /></svg>
  </button>
);
const XBox = ({ label }) => (
  <button type="button" aria-label={label} className="flex h-[13px] w-[14px] shrink-0 items-center justify-center rounded-xs border border-white">
    <svg width="7" height="7" stroke="#fff"><path d="M.5.5l6 6M6.500.5l-6 6" /></svg>
  </button>
);

function Chart() {
  return (
    <main className="flex min-w-0 flex-1 flex-col">
      <div className="relative flex h-[447px] shrink-0 bg-black font-['Liberation_Sans','Noto_Sans_CJK_SC',sans-serif] text-[11px]">
        <svg className="h-full min-w-0 flex-1" aria-label="K线图">
          <Grid bottom={447} rows={Array.from({ length: 17 }, (_, i) => 42.5 + 25 * i)} />
          <g shapeRendering="crispEdges">
            {profiles.flatMap((p) =>
              p.rows.flatMap(([kind, first, ...lens]) =>
                lens.map((len, i) => (
                  <rect key={`${p.x}-${first}-${i}`} x={p.x} y={Math.round(py(first)) + 2 * i} width={len} height="1" fill={profileColor[kind]} />
                ))
              )
            )}
            {bars.map(([o, c, h, l], i) => {
              const x = 5 * i;
              const top = Math.round(py(Math.min(o, c)));
              const col = c > o ? "#12e812" : "#f01414";
              return (
                <g key={i}>
                  <rect x={x + 2} y={Math.round(py(h))} width="1" height={Math.max(1, Math.round((l - h) / 3))} fill="#9a9a9a" />
                  <rect x={x + 1} y={top} width="3" height={Math.max(1, Math.round(Math.abs(o - c) / 3))} fill={col} />
                </g>
              );
            })}
            {levels.flatMap(([a, b, hi, lo]) => [hi, lo].map((v) => <rect key={`${a}${v}`} x={a} y={Math.round(py(v))} width={b - a} height="1" fill="#ffff50" />))}
          </g>
          {ribbons.map((pts, i) => <polyline key={i} points={pts} fill="none" stroke={ribbonColors[i]} strokeWidth="1" />).reverse()}
        </svg>
        <svg className="h-full w-[47px] shrink-0" aria-label="价格轴">
          <path d="M.5 0v447" stroke="#d01818" />
          {Array.from({ length: 17 }, (_, i) => (
            <g key={i}>
              <path d={`M0 ${42.5 + 25 * i}h4M0 ${30 + 25 * i}h2`} stroke="#d01818" />
              {(i < 7 || i > 9) && <text x="5" y={46 + 25 * i} fill="#e4e4e4">{`3,${850 - 10 * i}.0`}</text>}
            </g>
          ))}
          <Tag y={priceY(3784)} fill="#ff0000" text="3,784.0" />
          {[[3778.7, "#ffff00", "3,778.7"], [3773.3, "#ffdb00", "3,773.3"], [3767.7, "#ffb600", "3,767.7"], [3763.3, "#ff9200", "3,763.3"], [3760.2, "#ff6d00", "3,760.2"], [3758.3, "#ff4900", ""], [3757.3, "#ff2400", ""], [3757.1, "#ff0000", "3,757.1"]].map(([p, c, t]) => (
            <Tag key={p} y={priceY(p)} fill={c} text={t} />
          ))}
        </svg>
        <div className="absolute top-0 left-0 w-full pt-[3px] text-[#8f8f8f]">
          <div className="flex h-4 items-center pl-[10px] whitespace-nowrap">
            <button type="button" className="flex h-[13px] w-[33px] items-center justify-between border border-[#ddd] bg-[#8a8a8a] pr-[2px] pl-[3px] text-white">SA<span className="flex h-full items-center border-l pl-[2px]"><Caret c="#fff" /></span></button>
            <button type="button" className="ml-[6px] h-[13px] w-5 border border-[#cfe8cf] bg-[#0a800a] leading-[11px] text-white">VP</button>
            <span className="ml-[5px] w-[76px]">CFFEX.IF HOT</span>
            <MiniBtn label="商品选项" />
            <span className="w-[5px]" />
            <MiniBtn label="周期选项" className="w-[15px]">I</MiniBtn>
            <span className="ml-1 w-[150px] text-[12px]">沪深300期货 主力连续 5 分</span>
            <MiniBtn label="分辨率" />
            <span className="w-[7px]" />
            <MiniBtn label="报价字段" className="w-[18px]">R</MiniBtn>
            <span className="ml-[6px] w-[42px] text-[12px]">成交价</span>
            <span className="w-[39px]">CFFEX</span>
            <span className="w-[53px]">MCTrader</span>
            <span className="w-[29px] text-[12px]">期货</span>
            <span className="w-[110px] text-white">2018-05-31 21:00:03</span>
            <span className="w-[60px] text-white">买=3,783.4</span>
            <span className="w-[60px] text-white">卖=3,784.0</span>
            <span className="w-[60px] text-[#2ee02e]">开=3,723.0</span>
            <span className="w-[60px] text-white">高=3,787.4</span>
            <span className="w-[60px] text-white">低=3,720.8</span>
            <span className="w-[60px] text-[#2ee02e]">收=3,784.0</span>
            <span className="w-[72px] text-[#2ee02e]">最新=3,784.0</span>
            <span className="w-[33px] text-[#2ee02e]">+67.0</span>
            <span className="w-[42px] text-[#2ee02e]">+1.80%</span>
            <span className="text-white">成交量=20,357</span>
          </div>
          <div className="flex h-4 items-center pl-[4px] whitespace-nowrap text-[#f0f0f0]">
            <XBox label="移除 Mov Avg Exp Ribbon" />
            <span className="ml-[6px]">Mov Avg Exp Ribbon</span>
            <span className="ml-3 whitespace-pre">(close,  10,  1,  10,  yellow,  red)</span>
            <span className="ml-[6px] flex gap-[5px]">
              {["3,778.7", "3,773.3", "3,767.7", "3,763.3", "3,760.2", "3,758.3", "3,757.3", "3,757.1"].map((t, i) => <span key={t} style={{ color: ribbonColors[i] }}>{t}</span>)}
            </span>
          </div>
        </div>
      </div>
      <div className="h-[3px] shrink-0 border-b border-[#777] bg-[#f0f0f0]" />
      <div className="relative flex h-[163px] shrink-0 bg-black font-['Liberation_Sans',sans-serif] text-[11px]">
        <svg className="h-full min-w-0 flex-1" aria-label="MACD">
          <Grid bottom={146} rows={[33.5, 71.5, 108.5, 145.5]} />
          <g shapeRendering="crispEdges">
            {bars.map((_, i) => {
              const x = px(i);
              const d = at(macd, x) - at(macdAvg, x);
              if (Math.abs(d) < 1) return null;
              return <rect key={i} x={5 * i + 2} y={d < 0 ? ZERO + d : ZERO} width="1" height={Math.abs(d)} fill="#c01414" />;
            })}
            <rect x="0" y="71" width="1178" height="1" fill="#128012" />
          </g>
          <polyline points={toPoints(macd)} fill="none" stroke="#ffff50" />
          <polyline points={toPoints(macdAvg)} fill="none" stroke="#30e4ec" />
          <path d="M0 146.500h1400" stroke="#d01818" />
          {timeLabels.map(([x, t]) => (
            <g key={x}>
              <path d={`M${x + 0.5} 147v3`} stroke="#d01818" />
              <text x={x + 2} y="160" fill="#e4e4e4">{t}</text>
            </g>
          ))}
        </svg>
        <svg className="h-full w-[47px] shrink-0" aria-label="MACD轴">
          <path d="M.5 0v146M0 146.500h47M0 33.500h4M0 108.500h4" stroke="#d01818" />
          <text x="5" y="37" fill="#e4e4e4">10.00</text>
          <text x="5" y="112" fill="#e4e4e4">-10.00</text>
          <svg height="146"><text x="5" y="150" fill="#e4e4e4">-20.00</text></svg>
          <path d="M2 41l5-7h40v14H7z" fill="#30e4ec" />
          <Tag y={42} fill="#ffff00" text="7.85" />
          <path d="M2 71l5-7h40v14H7z" fill="#127012" />
          <Tag y={73} fill="#ff0000" text="-.69" />
        </svg>
        <div className="absolute top-1 left-[4px] flex h-[13px] items-center whitespace-pre text-[#e8e8e8]">
          <XBox label="移除 MACD" />
          <span className="ml-[6px]">MACD</span>
          <span className="ml-3">(12,  26,  9)</span>
          <span className="ml-1 text-[#ffff50]">7.85</span>
          <span className="ml-[6px] text-[#30e4ec]">8.54</span>
          <span className="ml-[6px] text-[#d01818]">-.69</span>
          <span className="ml-[6px] text-[#127a12]">.00</span>
        </div>
      </div>
      <div className="flex h-[17px] shrink-0 items-stretch bg-[#f0f0f0] text-[#444]">
        <button type="button" aria-label="向左滚动" className="flex w-[17px] items-center justify-center"><ChevronLeft size={12} strokeWidth={3} /></button>
        <div className="flex flex-1"><span className="flex-[972]" /><span className="flex-[297] bg-[#cdcdcd]" /></div>
        <button type="button" aria-label="向右滚动" className="flex w-[17px] items-center justify-center"><ChevronRight size={12} strokeWidth={3} /></button>
      </div>
    </main>
  );
}

/* ------------------------------------------------------------------ */
/* Trade panel                                                          */
/* ------------------------------------------------------------------ */
const PriceBtn = ({ a, b, cls }) => (
  <button type="button" className={`flex h-[35px] flex-col items-center justify-center text-[12px] leading-[14px] ${cls}`}>
    <span>{a}</span>
    <b className="font-['DejaVu_Sans',sans-serif] text-[11px]">{b}</b>
  </button>
);
const GrayBtn = ({ children, className = "" }) => (
  <button type="button" disabled className={`h-[26px] bg-[#c9c9c9] text-[12px] text-[#8f8f8f] ${className}`}>{children}</button>
);
const Ticket = ({ c, f, label, low }) => (
  <svg width="33" height="34" viewBox="0 0 33 34" fill="none" aria-label={label}>
    <path d="M6 3h26v29H6z" fill="#dfe8f2" stroke="#8ea3bd" />
    <path d="M6 1h23v30H1V6z" fill="#f7f9fc" stroke="#6f88a8" />
    <path d="M1 6h5V1" fill="#dde6f0" stroke="#6f88a8" />
    <rect x="2" y={low ? 19 : 10} width="27" height="11" fill={f} />
    <path d={low ? "M2 10h27M2 17h27" : "M2 8h27M2 23h27"} stroke={c} />
    <path d={low ? "M15 2v5M13 4h4M15 12v4M13 14h4" : "M24 2v5M22 4h4M7 25v5M5 27h4"} stroke={c} strokeWidth="1.500" />
    <text x="15" y={low ? 28 : 19} textAnchor="middle" fill="#fff" fontSize="10">{label}</text>
  </svg>
);
const Strategy = ({ label, children }) => (
  <svg width="33" height="36" viewBox="0 0 33 36" fill="none" aria-label={label}>
    <path d="M1 1h27v31H1z" fill="#dfe8f2" stroke="#8ea3bd" />
    <path d="M3 3h29v26l-5 5H3z" fill="#f7f9fc" stroke="#6f88a8" />
    <path d="M7 7v23M12 7v23M17 7v23M22 7v23M27 7v20M6 10h22M6 15h22M6 20h22M6 25h22" stroke="#c9d6e6" strokeWidth=".8" />
    <path d="M27 34v-5h5" fill="#dde6f0" stroke="#6f88a8" />
    {children}
  </svg>
);
const Ball = ({ x, y, r = 4.5 }) => (
  <><circle cx={x} cy={y} r={r} fill="#cf4327" stroke="#8c2411" /><path d={`M${x - 2} ${y}h4`} stroke="#fff" /></>
);
const Shelf = ({ children }) => (
  <div className="relative flex h-[54px] items-center justify-between border border-[#b9cde4] bg-white pr-[13px] pl-3">
    {children}
    <button type="button" aria-label="展开" className="absolute bottom-px left-1/2 flex h-2 w-[15px] -translate-x-1/2 items-center justify-center border border-[#bcc8d8] bg-white"><svg width="6" height="4" viewBox="0 0 6 4"><path d="M0 0h6L3 4z" fill="#446" /></svg></button>
    <svg className="absolute right-[2px] bottom-px" width="9" height="10" fill="none" stroke="#4a4a2a"><path d="M2 4.500H.5v-4h8v4H7M4.500 2v7M2 6.500L4.500 9 7 6.500" /></svg>
  </div>
);
function TradePanel() {
  return (
    <section aria-label="图表交易" className="mt-[2px] w-[229px] shrink-0 border-t border-l border-[#999] bg-[#f0f0f0] pr-[7px] pl-[6px] text-[12px]">
      <div className="mt-[6px] flex h-6 items-start">
        <button type="button" aria-label="连接状态" className="ml-4 flex h-[21px] w-[36px] items-center justify-center gap-[6px] border border-[#bbb] bg-[#e6e6e6]"><Led /><span className="flex items-center"><span className="mr-px h-3 w-px bg-black" /><svg width="6" height="4" viewBox="0 0 6 4"><path d="M0 0h6L3 4z" /></svg></span></button>
        <Select label="交易账户" value="" className="ml-[15px] h-6 w-[119px]" />
        <button type="button" aria-label="停靠" className="mt-[3px] ml-[6px]">
          <svg width="17" height="13" fill="none" stroke="#222"><path d="M1 5h3V2.500L8 6.500 4 10.500V8H1zM10.500 1.500h5v10h-5zM12 4h3M12 6.500h3M12 9h3" /></svg>
        </button>
      </div>
      <div className="mt-2 grid grid-cols-[68px_1fr_68px] gap-x-1 gap-y-[5px]">
        <button type="button" className={`h-[26px] ${buyCls}`}>市价买</button>
        <div className="row-span-4 px-[2px] pt-px">
          <div className="border-2 border-[#d8d8ce] bg-[#f6f6f1] text-center font-bold"><div className="bg-[#e6e6dc] text-[14px] leading-[22px]">持仓0</div><div className="leading-[23px]">持仓盈亏</div></div>
        </div>
        <button type="button" className={`h-[26px] ${sellCls}`}>市价卖</button>
        <PriceBtn a="卖价 买 @" b="3,784.0" cls={buyCls} />
        <PriceBtn a="买价 卖 @" b="3,783.4" cls={sellCls} />
        <PriceBtn a="买价 买 @" b="3,783.4" cls={buyCls} />
        <PriceBtn a="卖价 卖 @" b="3,784.0" cls={sellCls} />
        <GrayBtn>取消 买单</GrayBtn>
        <GrayBtn>取消 卖单</GrayBtn>
        <GrayBtn>全部取消</GrayBtn>
        <GrayBtn>平仓</GrayBtn>
        <GrayBtn>平仓反向</GrayBtn>
      </div>
      <div className="mt-[9px] flex gap-[3px] text-[11px]">
        <NumberBox label="交易数量" className="w-[81px] text-[12px]" />
        <Select label="交易有效期" value="DAY" className="h-6 w-[45px]" arrow="right-[2px]" />
        <Select label="到期日" value="2018-06-01" dim className="h-6 flex-1" />
      </div>
      <h2 className="mt-[3px] h-[25px] pl-[3px] leading-[18px]">条件下单:</h2>
      <Shelf>
        <Ticket label="STP" c="#5c6b7c" f="#5f6f82" />
        <Ticket label="LMT" c="#c32b5a" f="#b82c58" />
        <Ticket label="STL‡" c="#2a9150" f="#2f9a58" />
        <Ticket label="BRK" c="#6a4bb0" f="#6a4bb0" low />
      </Shelf>
      <h2 className="h-8 pl-[3px] leading-[28px]">出场策略:</h2>
      <Shelf>
        <Strategy label="止盈止损"><path d="M9 9h11M10 25V12M8 15l2-4 2 4" stroke="#2d7a4a" strokeWidth="1.300" /><path d="M24 17v9M22 23l2 4 2-4M14 28h13" stroke="#b03a20" strokeWidth="1.300" /><circle cx="24" cy="10" r="4" stroke="#678" strokeWidth="1.500" /><circle cx="24" cy="10" r="2" stroke="#678" strokeWidth=".8" /><Ball x={11} y={27} /></Strategy>
        <Strategy label="追踪"><path d="M8 9h18M10 26C9 14 14 10 17 10s7 4 8 13M8 20l2-4 2 3" stroke="#2d7a4a" strokeWidth="1.300" /><path d="M22 16l3 7M23 21l2 3 1-4M14 24h13" stroke="#b03a20" strokeWidth="1.300" /><Ball x={17} y={28} r={4} /></Strategy>
        <Strategy label="多级"><path d="M9 15l6-7M12 8h4v4M7 25l5-6M9 19h4v4" stroke="#2d7a4a" strokeWidth="1.300" /><path d="M18 8h10M20 9l4 7M16 19h6M15 19l5 6M9 28h13" stroke="#b03a20" strokeWidth="1.300" /><Ball x={25} y={18} r={3.5} /><Ball x={25} y={28} r={3.5} /></Strategy>
        <Strategy label="保本"><path d="M22 10C14 12 11 18 10 25M8 22l2 4 3-3M8 28h20" stroke="#b03a20" strokeWidth="1.300" /><Ball x={24} y={10} /></Strategy>
      </Shelf>
    </section>
  );
}

/* ------------------------------------------------------------------ */
/* Market scanner                                                       */
/* ------------------------------------------------------------------ */
function Scanner() {
  return (
    <aside aria-label="市场扫描器" className="mt-[2px] mb-[2px] flex w-[218px] shrink-0 flex-col bg-[#f0f0f0] text-[12px]">
      <div className="flex h-[19px] items-center justify-between bg-linear-to-b from-[#93b0d3] to-[#b4cdea] pr-[3px] pl-1 text-[#667a94]">市场扫描器<XBtn label="关闭市场扫描器" /></div>
      <div className="mt-[2px] flex h-5 items-center justify-center bg-[#e2e4e7] pr-[2px] text-black">
        <ChevronsDown size={11} className="mr-1 text-[#555]" /><button type="button">隐藏收藏夹</button><ChevronsDown size={11} className="ml-1 text-[#555]" />
        <ChevronsDown size={11} className="mr-1 ml-[2px] text-[#555]" /><button type="button">显示预扫描</button><ChevronsDown size={11} className="ml-1 text-[#555]" />
      </div>
      <div className="flex min-h-0 flex-1 flex-col overflow-hidden border-r-2 border-[#f0f0f0] bg-[#141414]">
        <table className="w-full table-fixed border-collapse">
          <colgroup><col className="w-[31px]" /><col className="w-[70px]" /><col className="w-[70px]" /><col /></colgroup>
          <thead>
            <tr className="h-9 bg-white">
              <th className="border-r border-[#ddd]" />
              <th className="border-r border-[#ddd] p-0 font-normal"><span className="flex items-center justify-end gap-[3px] pr-3">商品<button type="button" aria-label="商品筛选" className="flex h-4 w-[18px] items-center justify-center gap-px rounded-xs border border-black font-['Liberation_Serif',serif]">I<svg width="6" height="4" viewBox="0 0 6 4"><path d="M0 0h6L3 4z" /></svg></button></span></th>
              <th className="border-r border-[#ddd] p-0 font-normal">描述</th>
              <th className="p-0 pl-[22px] text-left font-normal whitespace-nowrap">周期</th>
            </tr>
          </thead>
          <tbody>
            {Array.from({ length: 26 }, (_, i) => (
              <tr key={i} className={`h-[18px] ${i % 2 ? "bg-black" : "bg-[#151515]"}`}>
                <th scope="row" className={`p-0 text-[12px] leading-4 font-normal ${i < 25 ? "border border-[#b5b5b5] bg-white" : "bg-[#c8c8c8]"}`}>{i < 25 ? i + 1 : ""}</th>
                <td className={`p-0 ${i % 2 ? "bg-[#101010]" : "bg-[#191919]"}`}>{i === 2 && <span className="block h-[18px] w-full border-3 border-double border-white" />}</td>
                <td colSpan={2} />
              </tr>
            ))}
          </tbody>
        </table>
        <div className="w-[31px] flex-1 bg-[#c8c8c8]" />
      </div>
      <div className="flex h-[17px] items-stretch text-[#444]">
        <button type="button" aria-label="扫描器左滚" className="flex w-[17px] items-center justify-center"><ChevronLeft size={12} strokeWidth={3} /></button>
        <span className="w-[17px] bg-[#cdcdcd]" />
        <button type="button" aria-label="扫描器右滚" className="ml-auto flex w-[17px] items-center justify-center"><ChevronRight size={12} strokeWidth={3} /></button>
      </div>
    </aside>
  );
}

function SheetTabs() {
  return (
    <div className="flex h-[21px] shrink-0 border-t border-[#777] bg-linear-to-r from-[#b0b0b0] to-[#ececec] text-[12px]">
      <div className="flex w-[85px] items-center justify-between bg-[#f0f0f0] pr-[7px] pl-[5px]">
        {[["首页", "M1 0v10M9 0v10L3 5z"], ["上一页", "M8 0v10L2 5z"], ["下一页", "M2 0v10l6-5z"], ["末页", "M9 0v10M1 0v10l6-5z"]].map(([l, d]) => (
          <button type="button" key={l} aria-label={l}><svg width="10" height="10" viewBox="-1 -1 12 12" fill="#777" stroke="#777"><path d={d} /></svg></button>
        ))}
      </div>
      <div className="relative flex">
        <svg className="absolute inset-0 h-full w-[240px]" fill="none" aria-hidden="true">
          <path d="M0 0l9 18h46L48 0z" fill="#dcdcdc" stroke="#999" />
          <path d="M52 0l8 18h86L138 0z" fill="#dcdcdc" stroke="#999" />
          <path d="M140 0l9 19h79l9-19z" fill="#fcfcfc" stroke="#666" />
        </svg>
        <button type="button" className="relative w-[62px] text-center">50ETF</button>
        <button type="button" className="relative w-[80px]">恒生指数期货</button>
        <button type="button" className="relative w-[92px] font-bold">沪深300期货</button>
      </div>
    </div>
  );
}

/* ------------------------------------------------------------------ */
/* Trade tracker                                                        */
/* ------------------------------------------------------------------ */
function Tracker() {
  return (
    <section aria-label="交易追踪器" className="flex h-[170px] shrink-0 border-t-3 border-white bg-[#f0f0f0] text-[12px]">
      <Strip title="交易追踪器" />
      <div className="ml-[3px] flex min-w-0 flex-1 flex-col border-t-2 border-l-2 border-[#999] bg-[#f0f0f0]">
        <div className="flex h-6 items-end pl-px">
          {[["账户", "w-[50px]"], ["委托", "w-[46px]"], ["持仓", "w-[48px]"], ["策略部位", "w-[61px]"], ["持仓历史", "w-[59px]"], ["日志", "w-12"], ["警告", "w-[47px]"]].map(([t, w], i) => (
            <button type="button" key={t} className={`border-r border-[#d9d9d9] text-left whitespace-nowrap ${w} ${i ? "h-[22px] pl-[5px]" : "h-6 bg-white pl-[7px]"}`}>{t}</button>
          ))}
        </div>
        <div className="mr-1 flex min-h-0 flex-1 border-t border-[#d9d9d9] bg-white pb-[3px] pl-[3px]">
          <div className="min-w-0 flex-1 overflow-hidden bg-[#151515]">
            <table className="w-full table-fixed border-collapse">
              <colgroup><col className="w-[103px]" /><col className="w-[100px]" /><col className="w-[100px]" /><col className="w-[100px]" /><col className="w-[100px]" /><col /></colgroup>
              <thead>
                <tr className="h-[22px] bg-white">
                  {["经纪商", "账户", "可用资金", "今日余额", "浮动盈亏"].map((h) => <th key={h} scope="col" className="border-r border-[#ddd] p-0 pr-4 font-normal">{h}</th>)}
                  <th />
                </tr>
              </thead>
              <tbody>
                {Array.from({ length: 6 }, (_, i) => (
                  <tr key={i} className={`h-[18px] ${i % 2 ? "bg-black" : "bg-[#151515]"}`}>
                    <td className={`p-0 pl-[3px] ${i % 2 ? "bg-[#111]" : "bg-[#1a1a1a]"}`}>{i === 5 && <span className="block h-[18px] border-3 border-double border-white" />}</td>
                    <td className={i % 2 ? "bg-[#111]" : "bg-[#1a1a1a]"} />
                    <td colSpan={4} />
                  </tr>
                ))}
              </tbody>
            </table>
          </div>
          <div className="flex w-[17px] flex-col items-center bg-[#f0f0f0] text-[#444]">
            <button type="button" aria-label="向上滚动" className="flex h-[18px] items-center"><ChevronUp size={12} strokeWidth={3} /></button>
            <span className="h-[17px] w-full bg-[#cdcdcd]" />
            <button type="button" aria-label="向下滚动" className="mt-auto flex h-[18px] items-center"><ChevronDown size={12} strokeWidth={3} /></button>
          </div>
        </div>
      </div>
    </section>
  );
}

function DrawBar() {
  const play = "flex h-6 items-center justify-center";
  return (
    <div role="toolbar" aria-label="绘图工具栏" className="flex h-9 shrink-0 items-center border-y border-t-[#999] border-b-[#d4d4d4] bg-white pl-1 text-[12px]">
      <Grip />
      <span className="w-1" />
      <Tools set={drawIcons} names={["line", "hline", "vline", "chan", "chan2", "fork"]} />
      <Sep />
      <Tools set={drawIcons} names={["fib", "fan", "wave", "arcs", "cols", "cols2"]} />
      <Sep />
      <Tools set={drawIcons} names={["rays", "grid"]} />
      <Sep />
      <Tools set={drawIcons} names={["note", "text", "rect", "ell", "arc", "aDown", "aUp"]} />
      <Sep />
      <Tools set={drawIcons} names={["magnet", "penLock"]} />
      <span className="mr-[3px] ml-[10px] h-[34px] w-px bg-[#aaa]" /><Grip />
      <div className="relative ml-[5px] h-6 w-[129px]">
        <input aria-label="键入商品" defaultValue="键入一个商品/周期" className="h-full w-full border border-[#7a7a8a] pl-[3px] outline-none" />
        <ChevronDown size={12} strokeWidth={1.5} className="absolute top-[6px] right-[3px] text-[#444]" />
      </div>
      <button type="button" aria-label="指南针" className="ml-[6px] rounded-full bg-[#d5ecf8]"><Compass size={18} className="text-[#2580ae]" /></button>
      <span className="mr-[3px] ml-[12px] h-[34px] w-px bg-[#aaa]" /><Grip />
      <Select label="分辨率" value="As is (5 分)" className="ml-1 h-6 w-[130px]" />
      <span className="ml-[2px] h-[26px] w-px bg-[#888]" />
      <div className="ml-1 flex h-[21px] w-[163px] items-center border border-[#777] pr-1">
        <input aria-label="日期" className="w-full min-w-0 flex-1 outline-none" />
        <svg className="mr-1" width="12" height="13" fill="#ddd" stroke="#777"><path d="M.5.500h11v9l-3 3h-8zM3 4h6M3 7h6" /></svg><Caret c="#345" />
      </div>
      <button type="button" aria-label="日历" className="ml-1"><G c="#777"><rect x="1" y="2" width="13" height="12" fill="#ddd" /><path d="M1 5h13M4 8h3M9 8h3M4 11h4" strokeWidth="2" /><path d="M10 9l6 6M16 11v5h-5" strokeWidth="2" /></G></button>
      <Sep />
      <button type="button" className="ml-[3px] flex items-center gap-[3px]"><G c="#4a8a3a"><path d="M2 4h3v12M5 8h3" strokeWidth="2.400" /><path d="M17 5h-4V3l-4 3 4 3V7h4z" stroke="#777" fill="#eee" /></G>跳转</button>
      <span className="ml-2" /><Sep />
      <button type="button" aria-label="上一根" className={`ml-1 w-[25px] ${play}`}><G c="#555"><path d="M11 3v12L4 9z" fill="#ccc" /><path d="M14 3v12" strokeWidth="2" /></G></button>
      <span className="flex w-5 justify-center"><Caret c="#777" /></span>
      <button type="button" aria-label="播放" className={`w-[25px] ${play}`}><G c="#555"><path d="M6 3v12l7-6z" fill="#ddd" /></G></button>
      <button type="button" aria-label="下一根" className={`ml-1 w-[25px] ${play}`}><G c="#555"><path d="M5 3v12" strokeWidth="2" /><path d="M8 3v12l6-6z" fill="#ccc" /></G></button>
      <span className="flex w-5 justify-center"><Caret c="#777" /></span>
      <button type="button" aria-label="末尾" className={`w-[22px] ${play}`}><G c="#555"><path d="M5 3v12l6-6z" fill="#ccc" /><path d="M14 3v12" strokeWidth="2" /></G></button>
      <span className="w-1" /><Sep />
      <input type="range" aria-label="速度" defaultValue="20" className="ml-[3px] h-4 w-[92px] appearance-none bg-transparent [&::-webkit-slider-runnable-track]:h-[2px] [&::-webkit-slider-runnable-track]:bg-[#d0d0d0] [&::-webkit-slider-thumb]:-mt-[6px] [&::-webkit-slider-thumb]:h-[14px] [&::-webkit-slider-thumb]:w-[6px] [&::-webkit-slider-thumb]:appearance-none [&::-webkit-slider-thumb]:bg-[#0078d7]" />
      <span className="ml-1" /><Sep />
      <button type="button" disabled className="flex items-center gap-[3px] text-[#999]"><G c="#888"><path d="M2 2h7v9H2zM6 6h10v9H6z" fill="#eee" /><path d="M9 9l4 7 1-3 3-1z" fill="#bbb" /></G>多图模式</button>
    </div>
  );
}

function StatusBar() {
  return (
    <>
      <footer className="flex h-[29px] shrink-0 items-end bg-[#f0f0f0] text-[12px]">
        <span className="self-center pl-[2px]">就绪</span>
        <div className="ml-auto flex h-6 items-center bg-white pr-[2px] text-[#2f6fbc]">
          <svg width="30" height="28" viewBox="0 0 30 28" className="-mt-1"><path d="M2 4l23-3 3 22-23 4z" fill="#ea5320" /><path d="M21 7c-4-2-12-1-12 3 0 5 13 2 13 7 0 4-9 5-14 3" fill="none" stroke="#fff" strokeWidth="3.400" /></svg>
          <b className="w-[23px] text-center text-[15px]">中</b>
          <span className="flex w-[23px] -scale-x-100 justify-center"><FaMoon size={12} /></span>
          <b className="w-[20px] text-center text-[14px]">°,</b>
          <span className="flex w-[23px] justify-center"><Smile size={17} /></span>
          <span className="flex w-[22px] justify-center"><FaMicrophone size={14} /></span>
          <span className="flex w-[23px] justify-center"><FaKeyboard size={17} /></span>
          <span className="flex w-[23px] justify-center text-[#b8bfca]"><FaUserAlt size={13} /></span>
          <span className="flex w-[21px] justify-center"><FaTshirt size={14} /></span>
          <span className="flex w-[20px] justify-center"><FaWrench size={14} /></span>
        </div>
      </footer>
      <div className="flex h-2 shrink-0 justify-end overflow-hidden bg-[#0a0c0e] pt-[5px] pr-9 text-[12px] leading-3 text-white">8:18</div>
    </>
  );
}

export default function App() {
  return (
    <div className="flex h-screen flex-col overflow-hidden bg-[#f0f0f0] font-['Open_Sans','Noto_Sans_CJK_SC',sans-serif] text-black">
      <TitleBar />
      <OrderBar />
      <div className="mt-px flex min-h-0 flex-1 border-t border-[#999] bg-[#f0f0f0]">
        <DataWindow />
        <div className="ml-[2px] flex min-w-0 flex-1 flex-col">
          <div className="flex min-h-0 flex-1">
            <Chart />
            <TradePanel />
          </div>
          <SheetTabs />
        </div>
        <Scanner />
      </div>
      <Tracker />
      <DrawBar />
      <StatusBar />
    </div>
  );
}
